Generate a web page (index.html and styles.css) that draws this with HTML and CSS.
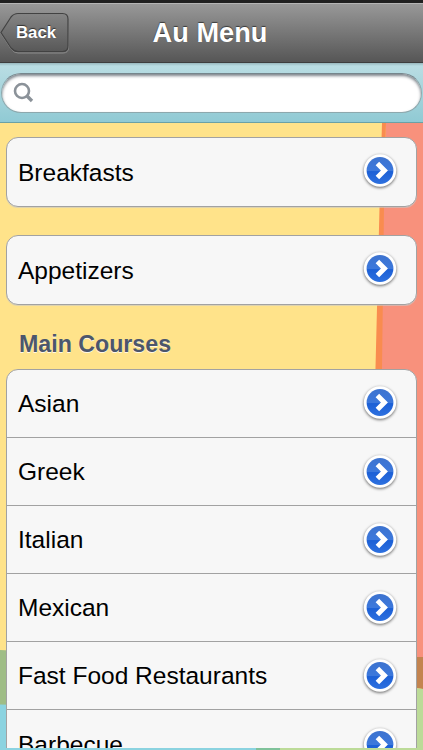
FILE: index.html
```html
<!DOCTYPE html>
<html lang="en">
<head>
    <meta charset="UTF-8">
    <meta name="viewport" content="width=device-width, initial-scale=1.0">
    <title>Au Menu</title>
    <link rel="stylesheet" href="styles.css">
</head>
<body>
    <!-- shared icons -->
    <svg class="defs" width="0" height="0">
        <defs>
            <linearGradient id="blue" x1="0" y1="0" x2="0" y2="1">
                <stop offset="0" stop-color="#3d73cf"/>
                <stop offset="0.5" stop-color="#3c78dc"/>
                <stop offset="0.54" stop-color="#1c60d6"/>
                <stop offset="1" stop-color="#2d70df"/>
            </linearGradient>
            <linearGradient id="grey" x1="0" y1="0" x2="0" y2="1">
                <stop offset="0" stop-color="#858585"/>
                <stop offset="1" stop-color="#585858"/>
            </linearGradient>
        </defs>
        <symbol id="disclosure" viewBox="0 0 40 40">
            <circle cx="20" cy="19.5" r="16.2" fill="#fff"/>
            <circle cx="20" cy="19.5" r="13.4" fill="url(#blue)"/>
            <path d="M17.400 12.500 L24.400 19.500 L17.400 26.500" fill="none" stroke="#fff" stroke-width="5"/>
        </symbol>
    </svg>

    <div class="statusbar"></div>
    <header class="navbar">
        <button class="back">
            <svg class="back-shape" width="70" height="42" viewBox="0 0 70 42">
                <path d="M1 21.5 L11 6 Q14 2.5 18 2.5 H63 Q68.500 2.500 68.500 8 V35.500 Q68.500 41 63 41 H18 Q14 41 11 37 Z" fill="none" stroke="#8c8c8c"/>
                <path d="M1 20.500 L11 5 Q14 1.500 18 1.500 H62.500 Q68 1.500 68 7 V34 Q68 39.500 62.500 39.500 H18 Q14 39.500 11 36 Z" fill="url(#grey)" stroke="#424242" stroke-width="1.200"/>
            </svg>
            <span>Back</span>
        </button>
        <h1>Au Menu</h1>
    </header>

    <div class="searchbar">
        <div class="field">
            <svg width="22" height="22" viewBox="0 0 22 22">
                <circle cx="9" cy="9" r="7" fill="none" stroke="#8b9299" stroke-width="2.600"/>
                <path d="M13.800 13.800 L19 19" stroke="#8b9299" stroke-width="3.400"/>
            </svg>
            <input type="text">
        </div>
    </div>

    <main class="content">
        <svg class="backdrop" width="423" height="627" viewBox="0 0 423 627" preserveAspectRatio="none">
            <path d="M0 0 H423 V627 H0 Z" fill="#ffe38a"/>
            <path d="M386 0 H423 V540 H370 Z" fill="#f8917c"/>
            <path d="M382 0 H386 L384 85 L382 245 L376 540 H365 L375.500 245 L379.500 85 Z" fill="#f98c4f"/>
            <path d="M0 527 L260 540 V627 H0 Z" fill="#9fbd86"/>
            <path d="M0 581.500 L20 582 V627 H0 Z" fill="#8bd3e0"/>
            <path d="M400 534 H423 V566 L400 563 Z" fill="#c3844f"/>
            <path d="M400 563 L423 566 V627 H400 Z" fill="#bcdb98"/>
            <path d="M0 620 H257 V627 H0 Z" fill="#8bd3e0"/>
            <path d="M256 620 H280 V627 H256 Z" fill="#7fc29a"/>
            <path d="M280 620 H423 V627 H280 Z" fill="#bcdb98"/>
        </svg>
        <div class="scroll">
            <ul class="group">
                <li>Breakfasts <svg class="arrow"><use href="#disclosure"/></svg></li>
            </ul>
            <ul class="group">
                <li>Appetizers <svg class="arrow"><use href="#disclosure"/></svg></li>
            </ul>
            <h2>Main Courses</h2>
            <ul class="group">
                <li>Asian <svg class="arrow"><use href="#disclosure"/></svg></li>
                <li>Greek <svg class="arrow"><use href="#disclosure"/></svg></li>
                <li>Italian <svg class="arrow"><use href="#disclosure"/></svg></li>
                <li>Mexican <svg class="arrow"><use href="#disclosure"/></svg></li>
                <li>Fast Food Restaurants <svg class="arrow"><use href="#disclosure"/></svg></li>
                <li>Barbecue <svg class="arrow"><use href="#disclosure"/></svg></li>
            </ul>
        </div>
    </main>
</body>
</html>
```

FILE: styles.css
```css
* {
    box-sizing: border-box;
}
body {
    margin: 0;
    height: 750px;
    overflow: hidden;
    display: flex;
    flex-direction: column;
    font-family: "Liberation Sans", Arial, Helvetica, sans-serif;
    background-color: #ffe38a;
}
h1, h2, ul {
    margin: 0;
    padding: 0;
}
.defs {
    position: absolute;
}
.statusbar {
    height: 3px;
    flex: none;
    background-color: #202020;
}
.navbar {
    height: 60px;
    flex: none;
    display: grid;
    grid-template-columns: 70px 1fr 73px;
    border-top: 1px solid #b5b5b5;
    border-bottom: 1px solid #3e3e3e;
    background: linear-gradient(#989898, #565656);
}
.navbar h1 {
    font-size: 27.2px;
    line-height: 58px;
    text-align: center;
    color: #fff;
    text-shadow: 0 -1px 1px rgba(0, 0, 0, 0.55);
}
.back {
    position: relative;
    height: 42px;
    margin-top: 8px;
    padding: 0 0 0 16px;
    border: none;
    background: none;
    text-align: left;
    font: bold 16.8px/40px "Liberation Sans", Arial, sans-serif;
    color: #fff;
    text-shadow: 0 -1px 1px rgba(0, 0, 0, 0.6);
}
.back-shape {
    position: absolute;
    left: 0;
    top: 0;
}
.back span {
    position: relative;
}
.searchbar {
    height: 60px;
    flex: none;
    padding: 10px 1px 0 1px;
    border-bottom: 1px solid #6ba1a5;
    background: linear-gradient(#97b7bd 0, #b9dde3 3px, #90cad4 100%);
}
.field {
    height: 40px;
    display: flex;
    align-items: center;
    padding: 0 16px 0 11px;
    border: 1px solid #8da8ad;
    border-top-color: #75868c;
    border-radius: 20px;
    background-color: #fff;
    box-shadow: inset 0 2px 3px rgba(70, 80, 90, 0.7);
}
.field input {
    flex: 1;
    border: none;
    outline: none;
    background: none;
    font-size: 22px;
}
.content {
    flex: 1;
    position: relative;
    min-height: 0;
}
.backdrop {
    position: absolute;
    left: 0;
    top: 0;
}
.scroll {
    position: relative;
    height: 625px;
    overflow: hidden;
    padding: 14px 6px 0;
}
.group {
    list-style: none;
    margin-bottom: 28px;
    border: 1px solid #a2a2a2;
    border-radius: 12px;
    background-color: #f7f7f7;
    box-shadow: 0 1px 0 rgba(200, 200, 200, 0.6);
}
.group li {
    height: 68px;
    display: flex;
    align-items: center;
    justify-content: space-between;
    padding: 1px 16px 0 11px;
    border-bottom: 1px solid #a2a2a2;
    font-size: 24.5px;
    color: #000;
}
.group li:last-child {
    border-bottom: none;
}
.arrow {
    width: 40px;
    height: 40px;
    filter: drop-shadow(0 1px 1.5px rgba(0, 0, 0, 0.6));
}
/* the first row of each group sits a little higher */
.group li:first-child .arrow {
    margin-bottom: 3px;
}
.scroll h2 {
    height: 36px;
    padding-left: 13px;
    font-size: 23.2px;
    line-height: 22px;
    color: #4c566c;
    text-shadow: 0 1px 0 rgba(255, 255, 255, 0.8);
}
```
